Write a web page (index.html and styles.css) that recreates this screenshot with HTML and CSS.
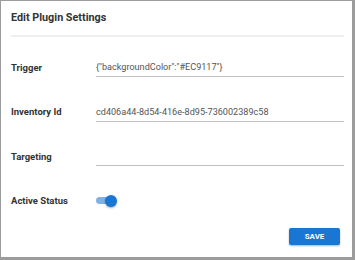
FILE: index.html
```html
<!DOCTYPE html>
<html>
<head>
<meta charset="utf-8">
<link rel="stylesheet" href="styles.css">
</head>
<body>
<div class="dialog">
  <div class="title">Edit Plugin Settings</div>
  <div class="divider"></div>
  <div class="form">
    <div class="row">
      <div class="label">Trigger</div>
      <div class="field">{"backgroundColor":"#EC9117"}</div>
    </div>
    <div class="row">
      <div class="label">Inventory Id</div>
      <div class="field">cd406a44-8d54-416e-8d95-736002389c58</div>
    </div>
    <div class="row">
      <div class="label">Targeting</div>
      <div class="field">&nbsp;</div>
    </div>
    <div class="row">
      <div class="label">Active Status</div>
      <div class="switch"><span class="track"></span><span class="thumb"></span></div>
    </div>
  </div>
  <div class="actions">
    <button class="save">SAVE</button>
  </div>
</div>
</body>
</html>
```
FILE: styles.css
```css
html, body {
  margin: 0;
  padding: 0;
}
body {
  background: #9c9c9c;
  font-family: Roboto, "Liberation Sans", sans-serif;
  width: 355px;
  height: 260px;
  overflow: hidden;
}
.dialog {
  margin: 1px 3px 3px 1px;
  width: 351px;
  height: 256px;
  box-sizing: border-box;
  background: #fff;
  padding: 0 8px 0 10px;
  display: flex;
  flex-direction: column;
}
.title {
  height: 34px;
  line-height: 34px;
  font-size: 10.8px;
  font-weight: 700;
  color: #333;
}
.divider {
  height: 2px;
  background: #efefef;
}
.form {
  padding-top: 8px;
}
.row {
  display: grid;
  grid-template-columns: 85px 1fr;
  height: 44.5px;
  align-items: center;
}
.label {
  font-size: 9.5px;
  font-weight: 700;
  color: #333;
}
.field {
  font-size: 9.1px;
  line-height: 12px;
  color: #555;
  padding: 4px 0 3px 0;
  border-bottom: 1px solid #c2c2c2;
}
.switch {
  position: relative;
  width: 22px;
  height: 12px;
}
.track {
  position: absolute;
  left: 0;
  top: 2.5px;
  width: 18px;
  height: 7px;
  border-radius: 4px;
  background: #7fb0e6;
}
.thumb {
  position: absolute;
  left: 9px;
  top: 0;
  width: 12px;
  height: 12px;
  border-radius: 50%;
  background: #1976d2;
  box-shadow: 0 1px 2px rgba(0,0,0,0.35);
}
.actions {
  margin-top: auto;
  display: flex;
  justify-content: flex-end;
  padding: 0 4px 12px 0;
}
.save {
  width: 51px;
  height: 17px;
  border: none;
  border-radius: 2px;
  background: #1976d2;
  color: #fff;
  font-family: Roboto, "Liberation Sans", sans-serif;
  font-size: 8px;
  font-weight: 700;
  padding: 0;
  box-shadow: 0 1px 2px rgba(0,0,0,0.3);
}
```
